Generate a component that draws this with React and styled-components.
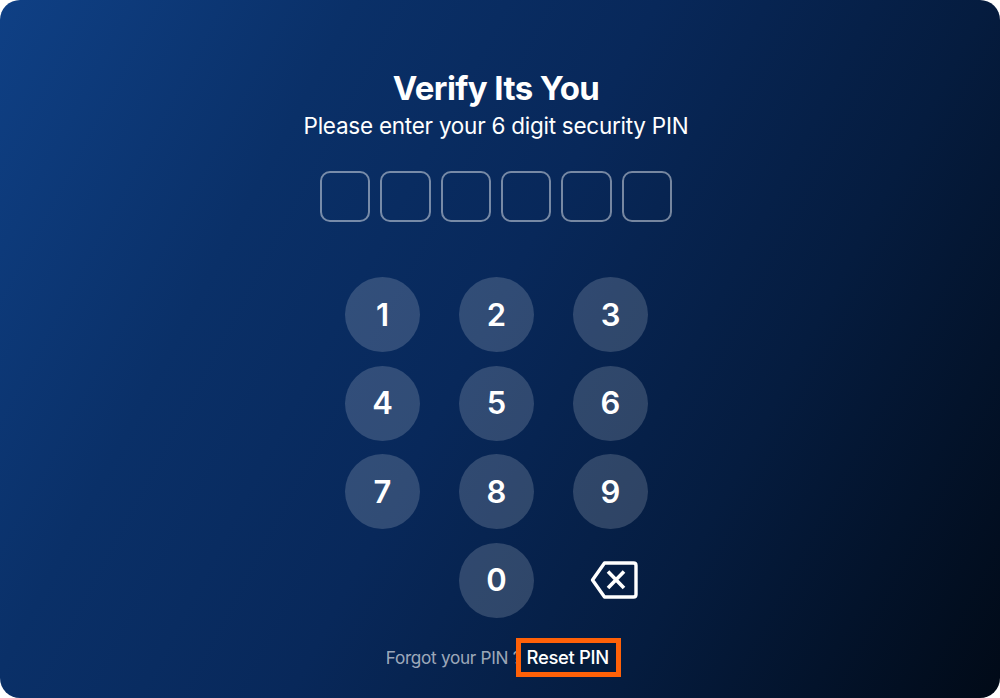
import React from "react";
import styled, { createGlobalStyle } from "styled-components";

const GlobalStyle = createGlobalStyle`
	html, body {
		margin: 0;
		padding: 0;
		background: #fff;
	}
	* {
		box-sizing: border-box;
	}
`;

export default function App() {
	const keys = ["1", "2", "3", "4", "5", "6", "7", "8", "9"];

	return (
		<>
			<GlobalStyle />
			<Screen>
				<Title>Verify Its You</Title>
				<Subtitle>Please enter your 6 digit security PIN</Subtitle>
				<PinRow>
					{[0, 1, 2, 3, 4, 5].map((item) => (
						<PinBox key={item} />
					))}
				</PinRow>
				<Keypad>
					{keys.map((item) => (
						<Key key={item}>{item}</Key>
					))}
					<Key $col={2}>0</Key>
					<Backspace aria-label="Delete">
						<svg width="48" height="38" viewBox="0 0 48 38" fill="none">
							<path
								d="M14.5 2H43.5C45 2 46 3 46 4.5V33.5C46 35 45 36 43.5 36H14.5L2.5 19Z"
								stroke="#fff"
								strokeWidth="3.4"
								strokeLinejoin="round"
							/>
							<path d="M18 10.5L34 27M34 10.5L18 27" stroke="#fff" strokeWidth="3.6" />
						</svg>
					</Backspace>
				</Keypad>
				<Footer>
					<ForgotText>Forgot your PIN ?</ForgotText>
					<ResetLink>Reset PIN</ResetLink>
				</Footer>
			</Screen>
		</>
	);
}

const Screen = styled.main`
	width: 1000px;
	height: 698px;
	border-radius: 20px;
	overflow: hidden;
	display: flex;
	flex-direction: column;
	align-items: center;
	padding: 68px 8px 0 0;
	background: linear-gradient(118deg, #0f4085 0%, #0a3068 26%, #08285a 48%, #051c3f 72%, #010a17 100%);
	color: #fff;
	font-family: "Inter", "Liberation Sans", sans-serif;
`;

const Title = styled.h1`
	margin: 0;
	font-size: 33px;
	line-height: 40px;
	font-weight: 700;
	letter-spacing: -0.6px;
`;

const Subtitle = styled.p`
	margin: 3px 0 0;
	font-size: 22.5px;
	line-height: 30px;
	font-weight: 400;
	letter-spacing: -0.25px;
	white-space: nowrap;
`;

const PinRow = styled.div`
	display: flex;
	gap: 10.2px;
	margin-top: 30px;
`;

const PinBox = styled.div`
	width: 50.2px;
	height: 51px;
	border: 2px solid rgba(255, 255, 255, 0.45);
	border-radius: 10px;
`;

const Keypad = styled.div`
	display: grid;
	grid-template-columns: repeat(3, 75px);
	grid-auto-rows: 75px;
	column-gap: 39px;
	row-gap: 13.6px;
	margin-top: 55px;
	margin-left: 1px;
`;

const Key = styled.button`
	grid-column: ${(props) => props.$col || "auto"};
	width: 75px;
	height: 75px;
	padding: 0 0 1px;
	border: none;
	border-radius: 50%;
	background: rgba(255, 255, 255, 0.17);
	color: #fff;
	font-family: inherit;
	font-size: 31px;
	font-weight: 600;
`;

const Backspace = styled.button`
	display: flex;
	align-items: center;
	justify-content: center;
	padding: 0 0 1px 7px;
	border: none;
	background: none;
`;

const Footer = styled.div`
	display: flex;
	align-items: center;
	margin-top: 20px;
	margin-left: 15px;
`;

const ForgotText = styled.span`
	font-size: 17.2px;
	color: rgba(255, 255, 255, 0.62);
	letter-spacing: -0.3px;
	white-space: nowrap;
`;

const ResetLink = styled.a`
	display: flex;
	align-items: center;
	justify-content: center;
	width: 105px;
	height: 39px;
	margin-left: -5px;
	padding-right: 2px;
	border: 5px solid #ff6108;
	background: #041b3c;
	position: relative;
	font-size: 18.4px;
	font-weight: 500;
	letter-spacing: -0.3px;
	color: #fff;
	white-space: nowrap;
`;
